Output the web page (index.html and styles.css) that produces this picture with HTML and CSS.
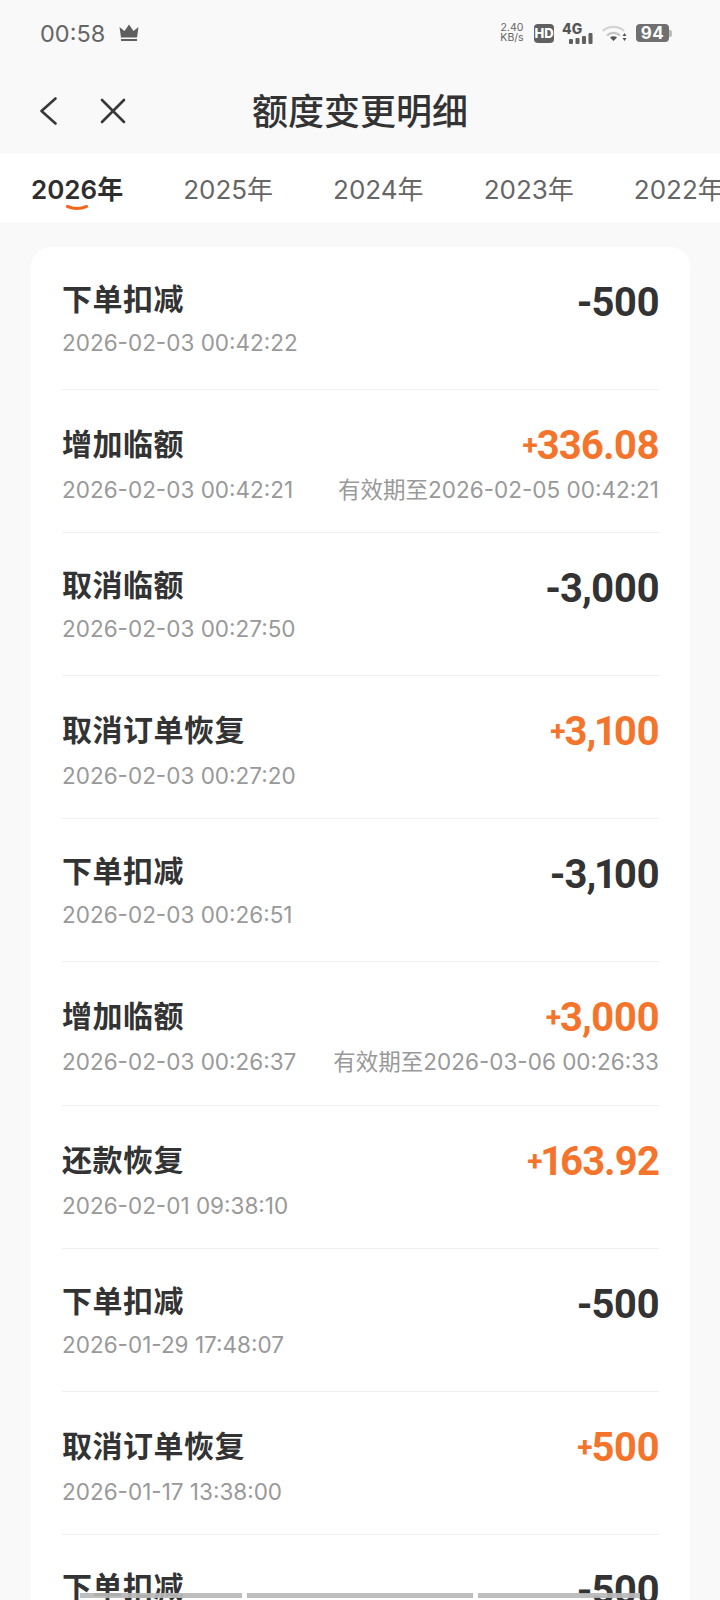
FILE: index.html
```html
<!DOCTYPE html>
<html lang="zh-CN">
<head>
    <meta charset="UTF-8">
    <meta name="viewport" content="width=device-width, initial-scale=1.0">
    <title>额度变更明细</title>
    <link rel="stylesheet" href="styles.css">
</head>
<body>
    <div class="page">
        <div class="status-bar">
            <div class="status-left">
                <span class="time">00:58</span>
                <svg class="crown" viewBox="0 0 20 18"><path d="M0.500 3l5 4L10 0.500 14.500 7l5-4-1.500 10.500h-16z"/><rect x="2" y="15" width="16" height="2"/></svg>
            </div>
            <div class="status-right">
                <div class="speed"><span>2.40</span><span>KB/s</span></div>
                <span class="hd">HD</span>
                <div class="signal">
                    <span class="net">4G</span>
                    <svg class="bars" viewBox="0 0 24 11"><rect x="0" y="6" width="4" height="5" rx="1"/><rect x="6.500" y="5" width="4" height="6" rx="1"/><rect x="13" y="3" width="4" height="8" rx="1"/><rect x="19.500" y="0" width="4" height="11" rx="1"/></svg>
                </div>
                <svg class="wifi" viewBox="0 0 25 18"><path class="wifi-off" d="M1 7C6 1.500 17 1.500 22 7"/><path class="wifi-on" d="M5 11.500C8.500 8 14.500 8 18 11.500"/><path class="wifi-dot" d="M8 13.500c2-1.700 5-1.700 7 0L11.500 17z"/><path class="wifi-dot" d="M22.500 9l2 3h-4zM22.500 17l-2-3h4z"/></svg>
                <div class="battery"><span class="battery-body">94</span><span class="battery-tip"></span></div>
            </div>
        </div>

        <header class="nav-bar">
            <div class="nav-icons">
                <svg class="nav-icon" viewBox="0 0 28 28"><path d="M21.500 1.500L7.500 14l14 12.500"/></svg>
                <svg class="nav-icon" viewBox="0 0 28 28"><path d="M3 3l22 22M25 3L3 25"/></svg>
            </div>
            <h1 class="nav-title">额度变更明细</h1>
        </header>

        <nav class="tabs">
            <a class="tab active">2026年<svg class="tab-mark" viewBox="0 0 22 6"><path d="M1.500 1.500Q11 5.500 20.500 1.500"/></svg></a>
            <a class="tab">2025年</a>
            <a class="tab">2024年</a>
            <a class="tab">2023年</a>
            <a class="tab">2022年</a>
        </nav>

        <main class="card">
            <div class="row">
                <div class="row-line"><span class="row-title">下单扣减</span><span class="amount">-500</span></div>
                <div class="row-line"><span class="row-date">2026-02-03 00:42:22</span></div>
            </div>
            <div class="row">
                <div class="row-line"><span class="row-title">增加临额</span><span class="amount plus"><span class="sign">+</span>336.08</span></div>
                <div class="row-line"><span class="row-date">2026-02-03 00:42:21</span><span class="row-date">有效期至2026-02-05 00:42:21</span></div>
            </div>
            <div class="row">
                <div class="row-line"><span class="row-title">取消临额</span><span class="amount">-3,000</span></div>
                <div class="row-line"><span class="row-date">2026-02-03 00:27:50</span></div>
            </div>
            <div class="row">
                <div class="row-line"><span class="row-title">取消订单恢复</span><span class="amount plus"><span class="sign">+</span>3,100</span></div>
                <div class="row-line"><span class="row-date">2026-02-03 00:27:20</span></div>
            </div>
            <div class="row">
                <div class="row-line"><span class="row-title">下单扣减</span><span class="amount">-3,100</span></div>
                <div class="row-line"><span class="row-date">2026-02-03 00:26:51</span></div>
            </div>
            <div class="row">
                <div class="row-line"><span class="row-title">增加临额</span><span class="amount plus"><span class="sign">+</span>3,000</span></div>
                <div class="row-line"><span class="row-date">2026-02-03 00:26:37</span><span class="row-date">有效期至2026-03-06 00:26:33</span></div>
            </div>
            <div class="row">
                <div class="row-line"><span class="row-title">还款恢复</span><span class="amount plus"><span class="sign">+</span>163.92</span></div>
                <div class="row-line"><span class="row-date">2026-02-01 09:38:10</span></div>
            </div>
            <div class="row">
                <div class="row-line"><span class="row-title">下单扣减</span><span class="amount">-500</span></div>
                <div class="row-line"><span class="row-date">2026-01-29 17:48:07</span></div>
            </div>
            <div class="row">
                <div class="row-line"><span class="row-title">取消订单恢复</span><span class="amount plus"><span class="sign">+</span>500</span></div>
                <div class="row-line"><span class="row-date">2026-01-17 13:38:00</span></div>
            </div>
            <div class="row">
                <div class="row-line"><span class="row-title">下单扣减</span><span class="amount">-500</span></div>
            </div>
        </main>

        <div class="gesture-bar">
            <span class="gesture short"></span>
            <span class="gesture long"></span>
            <span class="gesture short"></span>
        </div>
    </div>
</body>
</html>
```

FILE: styles.css
```css
/* ========= reset ========= */
*{margin:0;padding:0;box-sizing:border-box;}
html,body{height:100%;overflow:hidden;}
body{
    background:#f9f9f9;
    color:#333;
    font-family:Inter,"Noto Sans CJK SC",sans-serif;
}
.page{position:relative;height:1600px;overflow:hidden;}

/* ========= status bar ========= */
.status-bar{
    height:66px;
    padding:0 48px 0 40px;
    display:flex;justify-content:space-between;align-items:center;
    color:#666;
}
.status-left{display:flex;align-items:center;gap:14px;}
.time{font-size:23.500px;}
.crown{width:20px;height:18px;fill:#5f5f5f;}
.status-right{display:flex;align-items:center;}
.speed{
    display:flex;flex-direction:column;align-items:center;
    width:24px;margin-right:10px;
    font-size:10.500px;line-height:10px;color:#666;
}
.hd{
    width:20px;height:19px;border-radius:4px;margin-right:8px;
    background:#606060;color:#fff;
    font-size:13px;font-weight:800;line-height:19px;text-align:center;
}
.signal{position:relative;width:31px;height:22px;margin-right:9px;}
.net{position:absolute;left:0;top:-2px;font-size:14px;font-weight:800;color:#555;}
.bars{position:absolute;right:0;bottom:0;width:24px;height:11px;fill:#606060;}
.wifi{width:25px;height:18px;margin-right:9px;fill:none;}
.wifi-off{stroke:#d4d4d4;stroke-width:2.400;fill:none;}
.wifi-on{stroke:#c4c4c4;stroke-width:2.400;fill:none;}
.wifi-dot{fill:#555;}
.battery{display:flex;align-items:center;}
.battery-body{
    width:33px;height:18px;border-radius:4px;
    background:#707070;color:#fff;
    font-size:17px;font-weight:700;line-height:18px;text-align:center;letter-spacing:.5px;
}
.battery-tip{width:3px;height:7px;background:#bbb;border-radius:0 2px 2px 0;}

/* ========= nav ========= */
.nav-bar{position:relative;height:87px;padding-top:4px;display:flex;align-items:center;justify-content:center;}
.nav-icons{position:absolute;left:34px;top:31px;display:flex;gap:37px;}
.nav-icon{width:28px;height:28px;fill:none;stroke:#383838;stroke-width:2.600;stroke-linecap:round;stroke-linejoin:round;}
.nav-title{font-size:36px;font-weight:500;line-height:44px;color:#333;}

/* ========= tabs ========= */
.tabs{
    height:70px;background:#fff;
    padding:3px 0 0 31px;
    display:flex;align-items:center;gap:60px;
    overflow:hidden;white-space:nowrap;
}
.tab{position:relative;font-size:26px;line-height:36px;color:#666;flex-shrink:0;}
.tab.active{color:#2e2e2e;font-weight:600;}
.tab-mark{
    position:absolute;left:35px;bottom:-3px;
    width:22px;height:6px;
    fill:none;stroke:#f4651c;stroke-width:3;stroke-linecap:round;
}

/* ========= list card ========= */
.card{
    margin:24px 30px 0 31px;
    padding:0 31px;
    background:#fff;
    border-radius:20px;
}
.row{height:143.100px;padding-top:32px;border-bottom:1px solid #efefef;}
.row-line{display:flex;justify-content:space-between;align-items:center;}
.row-line + .row-line{margin-top:8px;}
.row-title{font-size:30px;font-weight:700;line-height:40px;letter-spacing:.5px;color:#333;}
.amount{
    position:relative;top:4px;
    font-family:Roboto,"Noto Sans CJK SC",sans-serif;
    font-size:40px;font-weight:700;line-height:40px;letter-spacing:-1px;
    font-variant-numeric:proportional-nums;
    color:#333;
}
.amount.plus{color:#f5742b;}
.sign{position:relative;top:-4px;font-size:28px;}
.row-date{font-size:22.500px;line-height:32px;color:#999;}

/* ========= gesture bar, lies over the list ========= */
.gesture-bar{
    position:absolute;left:80px;bottom:2px;
    display:flex;gap:5px;
}
.gesture{height:5px;background:rgba(185,185,185,.92);}
.short{width:162px;}
.long{width:226px;}
```
